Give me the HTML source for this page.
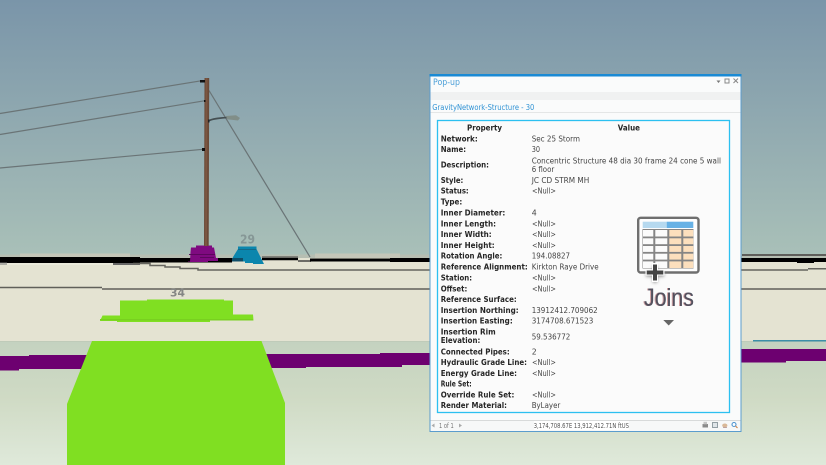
<!DOCTYPE html>
<html><head><meta charset="utf-8"><style>
html,body{margin:0;padding:0;width:826px;height:465px;overflow:hidden;background:#a8bfb8}
svg{display:block}
text{font-family:"DejaVu Sans","Liberation Sans",sans-serif;font-size:7.8px}
.t{filter:blur(.22px)}
.s{filter:blur(.35px)}
.b text{font-weight:bold;fill:#262626}
.v text{fill:#444}
</style></head><body>
<svg width="826" height="465" viewBox="0 0 826 465" xmlns="http://www.w3.org/2000/svg">
<defs>
<linearGradient id="sky" x1="0" y1="0" x2="0" y2="1"><stop offset="0" stop-color="#7a95a9"/><stop offset="1" stop-color="#a9c0b8"/></linearGradient>
<linearGradient id="low" x1="0" y1="0" x2="0" y2="1"><stop offset="0" stop-color="#c4d2c0"/><stop offset=".45" stop-color="#cfdac4"/><stop offset="1" stop-color="#dfe9da"/></linearGradient>
<filter id="sh" x="-50%" y="-50%" width="200%" height="200%"><feGaussianBlur stdDeviation="1.5"/></filter>
</defs>
<rect width="826" height="256" fill="url(#sky)"/>
<rect y="256" width="826" height="85" fill="#e4e3d2"/>
<rect y="341" width="826" height="124" fill="url(#low)"/>

<g class="s">
<!-- road edge -->
<path d="M0 254.500H826V258H0Z" fill="#b6beb2"/>
<path d="M20 253.500H130V257H20ZM315 253.500H400V258H315Z" fill="#c4c6b8"/>
<path d="M0 257H140V263H0Z" fill="#000"/>
<path d="M140 258H232V262.500H140Z" fill="#000"/>
<path d="M262 258H298V260.300H262Z" fill="#000"/>
<path d="M262 256.300H298V258H262ZM298 260H311V262H298Z" fill="#6c6c66"/>
<path d="M310 258.500H390V261.500H310Z" fill="#000"/>
<path d="M390 258H826V262H390Z" fill="#000"/>
<path d="M797 261.500H814V263H797Z" fill="#000"/>
<path d="M0 262.500H7V265H0ZM113 263H140V265H113Z" fill="#666"/>
<path d="M742 254H826V256H742Z" fill="#5e5e5a"/>
<path d="M0 263.500H113V264.500H0Z" fill="#f2f1e4"/>
<path d="M133 263.500H150V265.500H165V267H180V268.500H198V270H808" fill="none" stroke="#65655e" stroke-width="1.500"/>
<path d="M808 268.700H826" stroke="#65655e" stroke-width="1.500"/>
<path d="M0 287.500H102M102 289H826" fill="none" stroke="#60605a" stroke-width="1.600"/>
<path d="M0 341H826V342H0Z" fill="#bfcbb9"/>
<path d="M753 340H826V341.500H753Z" fill="#3c8fa8"/>
</g>

<!-- purple band -->
<path d="M0 356H29V355H90V369H19V370.500H0Z" fill="#6d0070"/>
<path d="M262 354H380V353H430V365H402V367H306V368H262Z" fill="#6d0070"/>
<path d="M741 349H826V361H786V362.500H741Z" fill="#6d0070"/>

<!-- green -->
<path d="M92 341H261.500L285 403V465H67V404Z" fill="#80df22"/>
<path d="M120 300.500H147V299.500H224V300.500H233V314.500H253L253.500 320.500H210V322H117V321H100L102.500 315.500H120Z" fill="#80df22"/>
<path d="M100 319H253V320.500H100Z" fill="#78d020"/>

<!-- labels -->
<g class="s">
<text x="170" y="296.500" style="font-size:11px;font-weight:bold;fill:#848684" textLength="15" lengthAdjust="spacingAndGlyphs">34</text>
<text x="240" y="243.500" style="font-size:12px;font-weight:bold;fill:#869796" textLength="15" lengthAdjust="spacingAndGlyphs">29</text>

<!-- structures -->
<path d="M196 245.500H212V247.500H214L216 258H218V261H208V262H188V261.500H190L190.500 252L191 247.500H196Z" fill="#7f0a80"/>
<path d="M189 254H215V255H189ZM200 257H214V258H200Z" fill="#5c065e"/>
<path d="M238 246.500H256.500V249L261 258L264 264H253V263H245V261.500H232L233 257L238 249Z" fill="#0b86ad"/>
<path d="M232 258H243V261.500H232Z" fill="#0e4e68"/>
<path d="M238 249H256V250H238Z" fill="#156a88"/>

<!-- wires -->
<g fill="none" stroke="#6a7476">
<path d="M0 113.500L201 80.800" stroke-width="1.200"/>
<path d="M0 134.500L205 100.700" stroke-width="1.200"/>
<path d="M0 168L203 149.300" stroke-width="1.200"/>
<path d="M209 90.500L310 257" stroke-width="1.200"/>
</g>
<path d="M204.500 78H209.200L208.700 246H204Z" fill="#6a4a38"/>
<path d="M205.500 78H207.500L207 246H205Z" fill="#7b5641"/>
<path d="M200 80H205V82.500H200ZM202 148H205V151H202ZM204 100H205.500V102H204Z" fill="#111"/>
<path d="M208.500 121C212 118.500 220 118 227 117.500" fill="none" stroke="#454f52" stroke-width="1.700"/>
<path d="M226 116L236 115.300L240 118L238 120.500L227 119.300Z" fill="#818e88"/>
<path d="M208 119.500H209.500V122.500H208Z" fill="#222"/>
</g>

<!-- panel -->
<rect x="429.500" y="74" width="312" height="358" fill="#5b9ccd"/>
<rect x="429.500" y="74" width="312" height="2.500" fill="#1a8ad4"/>
<rect x="430.500" y="76.500" width="310" height="354.500" fill="#fafbfb"/>
<rect x="430.500" y="92" width="310" height="8" fill="#f0f1f1"/>
<rect x="430.500" y="112" width="310" height="1" fill="#e4e6e6"/>
<rect x="437.500" y="120.500" width="292" height="292" fill="#fbfbfb" stroke="#2cc0f0" stroke-width="1.300"/>
<rect x="430.500" y="420" width="310" height="1" fill="#d8dada"/>
<rect x="430.500" y="421" width="310" height="10" fill="#f7f8f8"/>
<rect x="534" y="421" width="95" height="9" fill="#fff"/>

<g class="t">
<text x="433" y="85" style="font-size:8.500px;fill:#4b9fd8" textLength="27" lengthAdjust="spacingAndGlyphs">Pop-up</text>
<text x="432.300" y="110" style="font-size:8px;fill:#2f92d4" textLength="102" lengthAdjust="spacingAndGlyphs">GravityNetwork-Structure - 30</text>
<path d="M716.500 80.500H720.500L718.500 83Z" fill="#777"/>
<rect x="725" y="79" width="4" height="4" fill="none" stroke="#888" stroke-width="1"/>
<path d="M733.500 78.500L738 83M738 78.500L733.500 83" stroke="#888" stroke-width="1" fill="none"/>

<g class="b">
<text x="467" y="130.700" textLength="35" lengthAdjust="spacingAndGlyphs">Property</text>
<text x="617.700" y="130.700" textLength="22.300" lengthAdjust="spacingAndGlyphs">Value</text>
<text x="440.700" y="141.400" textLength="37" lengthAdjust="spacingAndGlyphs">Network:</text>
<text x="440.700" y="152" textLength="25.300" lengthAdjust="spacingAndGlyphs">Name:</text>
<text x="440.700" y="167.400" textLength="48.300" lengthAdjust="spacingAndGlyphs">Description:</text>
<text x="440.700" y="183" textLength="22.600" lengthAdjust="spacingAndGlyphs">Style:</text>
<text x="440.700" y="193.700" textLength="28" lengthAdjust="spacingAndGlyphs">Status:</text>
<text x="440.700" y="204.400" textLength="21.600" lengthAdjust="spacingAndGlyphs">Type:</text>
<text x="440.700" y="215.400" textLength="64.600" lengthAdjust="spacingAndGlyphs">Inner Diameter:</text>
<text x="440.700" y="226.400" textLength="55.300" lengthAdjust="spacingAndGlyphs">Inner Length:</text>
<text x="440.700" y="237" textLength="51" lengthAdjust="spacingAndGlyphs">Inner Width:</text>
<text x="440.700" y="248" textLength="54" lengthAdjust="spacingAndGlyphs">Inner Height:</text>
<text x="440.700" y="258.700" textLength="61.600" lengthAdjust="spacingAndGlyphs">Rotation Angle:</text>
<text x="440.700" y="269.400" textLength="87" lengthAdjust="spacingAndGlyphs">Reference Alignment:</text>
<text x="440.700" y="280.400" textLength="31.300" lengthAdjust="spacingAndGlyphs">Station:</text>
<text x="440.700" y="291.400" textLength="26.600" lengthAdjust="spacingAndGlyphs">Offset:</text>
<text x="440.700" y="302" textLength="76" lengthAdjust="spacingAndGlyphs">Reference Surface:</text>
<text x="440.700" y="313" textLength="78" lengthAdjust="spacingAndGlyphs">Insertion Northing:</text>
<text x="440.700" y="323.700" textLength="72" lengthAdjust="spacingAndGlyphs">Insertion Easting:</text>
<text x="440.700" y="334.700" textLength="55" lengthAdjust="spacingAndGlyphs">Insertion Rim</text>
<text x="440.700" y="343" textLength="39.600" lengthAdjust="spacingAndGlyphs">Elevation:</text>
<text x="440.700" y="354.400" textLength="69" lengthAdjust="spacingAndGlyphs">Connected Pipes:</text>
<text x="440.700" y="365" textLength="86.300" lengthAdjust="spacingAndGlyphs">Hydraulic Grade Line:</text>
<text x="440.700" y="376" textLength="76.300" lengthAdjust="spacingAndGlyphs">Energy Grade Line:</text>
<text x="440.700" y="386.700" textLength="31" lengthAdjust="spacingAndGlyphs">Rule Set:</text>
<text x="440.700" y="397.400" textLength="73.600" lengthAdjust="spacingAndGlyphs">Override Rule Set:</text>
<text x="440.700" y="408" textLength="66.300" lengthAdjust="spacingAndGlyphs">Render Material:</text>
</g>
<g class="v">
<text x="531.700" y="141.400" textLength="48.300" lengthAdjust="spacingAndGlyphs">Sec 25 Storm</text>
<text x="531.700" y="152" textLength="8.300" lengthAdjust="spacingAndGlyphs">30</text>
<text x="531.700" y="163.400" textLength="189.300" lengthAdjust="spacingAndGlyphs">Concentric Structure 48 dia 30 frame 24 cone 5 wall</text>
<text x="531.700" y="172" textLength="22.600" lengthAdjust="spacingAndGlyphs">6 floor</text>
<text x="531.700" y="183" textLength="57.600" lengthAdjust="spacingAndGlyphs">JC CD STRM MH</text>
<text x="532" y="193.700" textLength="24" lengthAdjust="spacingAndGlyphs">&lt;Null&gt;</text>
<text x="531.700" y="215.400">4</text>
<text x="532" y="226.400" textLength="24" lengthAdjust="spacingAndGlyphs">&lt;Null&gt;</text>
<text x="532" y="237" textLength="24" lengthAdjust="spacingAndGlyphs">&lt;Null&gt;</text>
<text x="532" y="248" textLength="24" lengthAdjust="spacingAndGlyphs">&lt;Null&gt;</text>
<text x="531.700" y="258.700" textLength="38.300" lengthAdjust="spacingAndGlyphs">194.08827</text>
<text x="531.700" y="269.400" textLength="67" lengthAdjust="spacingAndGlyphs">Kirkton Raye Drive</text>
<text x="532" y="280.400" textLength="24" lengthAdjust="spacingAndGlyphs">&lt;Null&gt;</text>
<text x="532" y="291.400" textLength="24" lengthAdjust="spacingAndGlyphs">&lt;Null&gt;</text>
<text x="531.700" y="313" textLength="66" lengthAdjust="spacingAndGlyphs">13912412.709062</text>
<text x="531.700" y="323.700" textLength="61.600" lengthAdjust="spacingAndGlyphs">3174708.671523</text>
<text x="531.700" y="339.300" textLength="38.600" lengthAdjust="spacingAndGlyphs">59.536772</text>
<text x="531.700" y="354.400">2</text>
<text x="532" y="365" textLength="24" lengthAdjust="spacingAndGlyphs">&lt;Null&gt;</text>
<text x="532" y="376" textLength="24" lengthAdjust="spacingAndGlyphs">&lt;Null&gt;</text>
<text x="532" y="397.400" textLength="24" lengthAdjust="spacingAndGlyphs">&lt;Null&gt;</text>
<text x="531.700" y="408" textLength="28.600" lengthAdjust="spacingAndGlyphs">ByLayer</text>
</g>

<!-- footer -->
<path d="M434.500 423.500V427.500L431.500 425.500Z" fill="#aaa"/>
<path d="M459 423.500V427.500L462 425.500Z" fill="#aaa"/>
<text x="439" y="428" style="font-size:7px;fill:#777" textLength="14.700" lengthAdjust="spacingAndGlyphs">1 of 1</text>
<text x="533.700" y="428" style="font-size:7px;fill:#555" textLength="95.300" lengthAdjust="spacingAndGlyphs">3,174,708.67E 13,912,412.71N ftUS</text>
<rect x="702.500" y="424" width="5.500" height="3.500" fill="#8b8b8b"/><rect x="703.500" y="421.800" width="3.500" height="2.500" fill="#c4c4c4"/>
<rect x="712.500" y="422.500" width="5" height="5" fill="#dfe5e8" stroke="#7c8a90" stroke-width=".8"/>
<ellipse cx="724.800" cy="425.500" rx="2.600" ry="2" fill="#d9b897"/><path d="M723 427.500H727" stroke="#a88" stroke-width=".7"/>
<circle cx="734" cy="424.500" r="2" fill="#fff" stroke="#4c94d0" stroke-width="1.100"/><path d="M735.500 426L737.500 428" stroke="#cf8045" stroke-width="1.100"/>
</g>

<!-- joins icon -->
<rect x="638.200" y="217.800" width="60.300" height="54.700" rx="2.500" fill="#fdfdfd" stroke="#6f6f6f" stroke-width="2.400"/>
<rect x="642.500" y="229" width="51" height="39.500" fill="#858585"/>
<rect x="642.700" y="221.700" width="24" height="6.300" fill="#b6d9ef"/>
<rect x="666.700" y="221.700" width="26.600" height="6.300" fill="#67b1e5"/>
<g fill="#fbfbfb">
<rect x="643" y="230" width="10.300" height="6.500"/><rect x="655.300" y="230" width="12" height="6.500"/>
<rect x="643" y="238.300" width="10.300" height="5.900"/><rect x="655.300" y="238.300" width="12" height="5.900"/>
<rect x="643" y="246" width="10.300" height="5.900"/><rect x="655.300" y="246" width="12" height="5.900"/>
<rect x="643" y="253.700" width="10.300" height="5.900"/><rect x="655.300" y="253.700" width="12" height="5.900"/>
<rect x="643" y="261.400" width="10.300" height="6.600"/><rect x="655.300" y="261.400" width="12" height="6.600"/>
</g>
<g fill="#fcdfbd">
<rect x="669.300" y="230" width="12" height="6.500"/><rect x="683.300" y="230" width="10" height="6.500"/>
<rect x="669.300" y="238.300" width="12" height="5.900"/><rect x="683.300" y="238.300" width="10" height="5.900"/>
<rect x="669.300" y="246" width="12" height="5.900"/><rect x="683.300" y="246" width="10" height="5.900"/>
<rect x="669.300" y="253.700" width="12" height="5.900"/><rect x="683.300" y="253.700" width="10" height="5.900"/>
<rect x="669.300" y="261.400" width="12" height="6.600"/><rect x="683.300" y="261.400" width="10" height="6.600"/>
</g>
<path d="M646 270.500H664V275H646Z M652.700 264H657.300V281H652.700Z" fill="#888" filter="url(#sh)" transform="translate(0 1.500)"/>
<path d="M652 263H658V269.500H664.500V275.500H658V282H652V275.500H645.500V269.500H652Z" fill="#fff"/>
<path d="M653 264.500H657V270.500H663.300V274.500H657V280.500H653V274.500H646.700V270.500H653Z" fill="#444"/>
<text x="644" y="306" style="font-size:25px;fill:#55505c;font-family:'Liberation Sans',sans-serif;filter:drop-shadow(.6px 0 0 rgba(60,150,210,.55)) drop-shadow(-.6px 0 0 rgba(170,70,70,.5))" textLength="50" lengthAdjust="spacingAndGlyphs">Joins</text>
<path d="M663.300 320H674L668.700 325.500Z" fill="#666"/>
</svg>
</body></html>
